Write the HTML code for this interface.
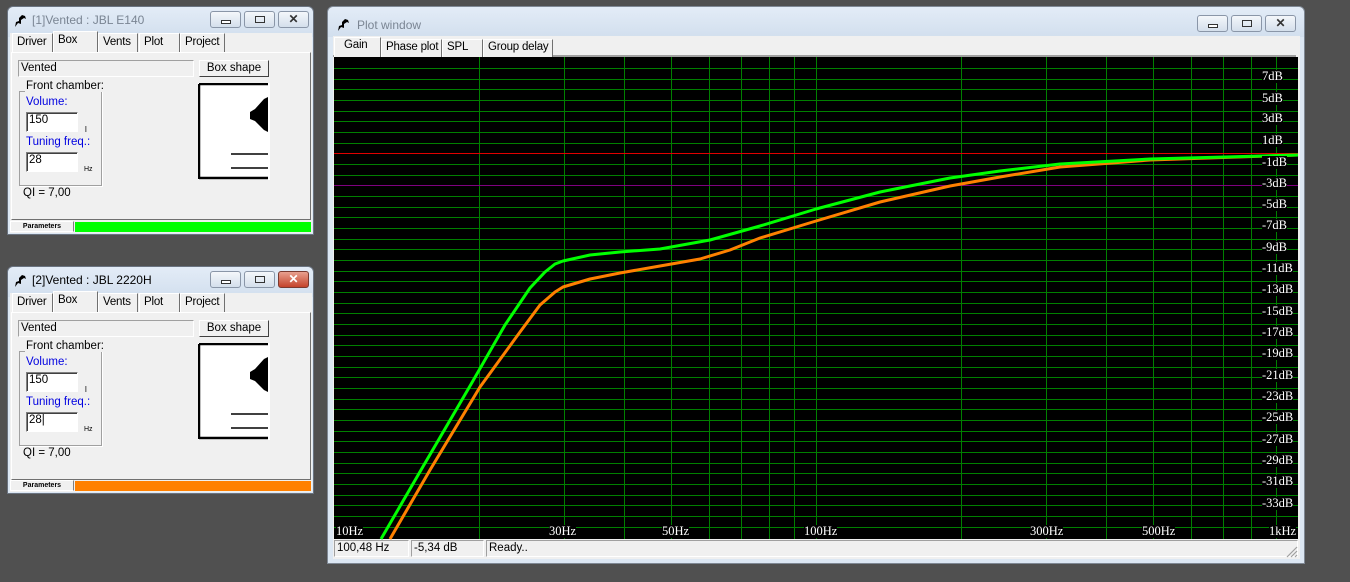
<!DOCTYPE html>
<html><head><meta charset="utf-8"><style>
*{box-sizing:border-box;margin:0;padding:0}
body{width:1350px;height:582px;background:#505050;position:relative;overflow:hidden;font-family:"Liberation Sans",sans-serif;font-size:11.5px;color:#000}
.a{position:absolute;white-space:nowrap}
.win{position:absolute;background:#dce7f3;border:1px solid #6a7380;border-radius:6px 6px 0 0}
.title{position:absolute;left:0;right:0;top:0;height:30px;background:linear-gradient(#e3ecf7,#d2dfee);border-radius:6px 6px 0 0}
.tb{position:absolute;height:17px;width:31px;border:1px solid #8a96a8;border-radius:3px;background:linear-gradient(#f4f7fb,#d4dfec)}
.tb.red{background:linear-gradient(#e8a08f,#c4432b);border-color:#7a3a30}
.client{position:absolute;background:#f0f0f0}
.tab{position:absolute;height:19px;border:1px solid #fff;border-right:1px solid #707070;border-bottom:none;background:#f0f0f0;padding:2px 0 0 4px;font-size:11.5px;white-space:nowrap;overflow:hidden;letter-spacing:-0.2px}
.sunk{position:absolute;border:1px solid;border-color:#a0a0a0 #fff #fff #a0a0a0;background:#f0f0f0;white-space:nowrap}
.inp{position:absolute;background:#fff;border:1px solid;border-color:#808080 #fff #fff #808080;box-shadow:inset 1px 1px 0 #404040;padding:1px 2px;font-size:11.5px}
.btn{position:absolute;border:1px solid;border-color:#fff #404040 #404040 #fff;background:#f0f0f0;text-align:center;font-size:11.5px;padding-top:1px;white-space:nowrap}
.blue{color:#0000e0}
.dl{position:absolute;left:1262px;color:#fff;background:#000;font-family:"Liberation Serif",serif;font-size:12.5px;line-height:13px;white-space:nowrap}
.hl{position:absolute;top:525px;color:#fff;background:#000;font-family:"Liberation Serif",serif;font-size:12.5px;line-height:13px;white-space:nowrap}
</style></head><body>

<!-- Window 1 -->
<div class="win" style="left:7px;top:6px;width:307px;height:229px">
 <div class="title"></div>
 <svg class="a" style="left:5px;top:7px" width="14" height="14"><path d="M2 13 L5 9 L8 10 L8 6 L11 4 L13 5 L12 2 L9 1 L6 4 L6 7 L3 8 Z" fill="#000"/></svg>
 <div class="a" style="left:24px;top:6px;color:#7a8593;font-size:12px">[1]Vented : JBL E140</div>
 <div class="tb" style="left:202px;top:4px"><div class="a" style="left:10px;top:8px;width:10px;height:4px;border:1px solid #333;background:#fff"></div></div>
 <div class="tb" style="left:236px;top:4px"><div class="a" style="left:10px;top:4px;width:10px;height:7px;border:1px solid #333"></div></div>
 <div class="tb" style="left:270px;top:4px;text-align:center;font-weight:bold;color:#333;font-size:12px;line-height:14px">✕</div>
 <div class="client" style="left:2px;top:26px;width:302px;height:200px"></div>
 <div class="tab" style="left:4px;top:26px;width:41px">Driver</div>
 <div class="tab" style="left:45px;top:24px;width:45px;height:22px;padding-top:2px">Box</div>
 <div class="tab" style="left:90px;top:26px;width:40px">Vents</div>
 <div class="tab" style="left:131px;top:26px;width:41px">Plot</div>
 <div class="tab" style="left:172px;top:26px;width:45px">Project</div>
 <div class="a" style="left:3px;top:45px;width:300px;height:168px;border:1px solid;border-color:#fff #707070 #707070 #fff"></div>
 <div class="sunk" style="left:10px;top:53px;width:176px;height:17px;padding:1px 2px">Vented</div>
 <div class="btn" style="left:191px;top:53px;width:70px;height:17px">Box shape</div>
 <div class="a" style="left:11px;top:84px;width:83px;height:95px;border:1px solid #a0a0a0;box-shadow:1px 1px 0 #fff"></div>
 <div class="a" style="left:17px;top:73px;background:#f0f0f0;padding:0 1px">Front chamber:</div>
 <div class="a blue" style="left:18px;top:89px">Volume:</div>
 <div class="inp" style="left:18px;top:105px;width:52px;height:20px">150</div>
 <div class="a" style="left:77px;top:118px;font-size:8px">l</div>
 <div class="a blue" style="left:18px;top:129px">Tuning freq.:</div>
 <div class="inp" style="left:18px;top:145px;width:52px;height:20px">28</div>
 <div class="a" style="left:76px;top:159px;font-size:7px">Hz</div>
 <svg class="a" style="left:190px;top:76px" width="72" height="97"><rect x="0" y="0" width="72" height="97" fill="#fff"/><path d="M1 1 H70 M1 1 V96 M1 95 H70" stroke="#000" stroke-width="2.5" fill="none"/><path d="M33 71 H70 M33 85 H70" stroke="#000" stroke-width="1.5"/><path d="M52 29 L57 26 L66 16 L70 14 L70 49 L66 47 L57 38 L52 36 Z" fill="#000"/></svg>
 <div class="a" style="left:15px;top:180px">QI = 7,00</div>
 <div class="a" style="left:2px;top:214px;width:64px;height:11px;border:1px solid #fff;border-right-color:#808080;font-size:7px;font-weight:bold;text-align:center;line-height:10px;background:#f0f0f0">Parameters</div>
 <div class="a" style="left:67px;top:215px;width:236px;height:10px;background:#00ff00"></div>
</div>

<!-- Window 2 -->
<div class="win" style="left:7px;top:266px;width:307px;height:228px">
 <div class="title"></div>
 <svg class="a" style="left:5px;top:7px" width="14" height="14"><path d="M2 13 L5 9 L8 10 L8 6 L11 4 L13 5 L12 2 L9 1 L6 4 L6 7 L3 8 Z" fill="#000"/></svg>
 <div class="a" style="left:24px;top:6px;color:#000;font-size:12px">[2]Vented : JBL 2220H</div>
 <div class="tb" style="left:202px;top:4px"><div class="a" style="left:10px;top:8px;width:10px;height:4px;border:1px solid #333;background:#fff"></div></div>
 <div class="tb" style="left:236px;top:4px"><div class="a" style="left:10px;top:4px;width:10px;height:7px;border:1px solid #333"></div></div>
 <div class="tb red" style="left:270px;top:4px;text-align:center;font-weight:bold;color:#fff;font-size:12px;line-height:14px">✕</div>
 <div class="client" style="left:2px;top:26px;width:302px;height:199px"></div>
 <div class="tab" style="left:4px;top:26px;width:41px">Driver</div>
 <div class="tab" style="left:45px;top:24px;width:45px;height:22px;padding-top:2px">Box</div>
 <div class="tab" style="left:90px;top:26px;width:40px">Vents</div>
 <div class="tab" style="left:131px;top:26px;width:41px">Plot</div>
 <div class="tab" style="left:172px;top:26px;width:45px">Project</div>
 <div class="a" style="left:3px;top:45px;width:300px;height:168px;border:1px solid;border-color:#fff #707070 #707070 #fff"></div>
 <div class="sunk" style="left:10px;top:53px;width:176px;height:17px;padding:1px 2px">Vented</div>
 <div class="btn" style="left:191px;top:53px;width:70px;height:17px">Box shape</div>
 <div class="a" style="left:11px;top:84px;width:83px;height:95px;border:1px solid #a0a0a0;box-shadow:1px 1px 0 #fff"></div>
 <div class="a" style="left:17px;top:73px;background:#f0f0f0;padding:0 1px">Front chamber:</div>
 <div class="a blue" style="left:18px;top:89px">Volume:</div>
 <div class="inp" style="left:18px;top:105px;width:52px;height:20px">150</div>
 <div class="a" style="left:77px;top:118px;font-size:8px">l</div>
 <div class="a blue" style="left:18px;top:129px">Tuning freq.:</div>
 <div class="inp" style="left:18px;top:145px;width:52px;height:20px">28|</div>
 <div class="a" style="left:76px;top:159px;font-size:7px">Hz</div>
 <svg class="a" style="left:190px;top:76px" width="72" height="97"><rect x="0" y="0" width="72" height="97" fill="#fff"/><path d="M1 1 H70 M1 1 V96 M1 95 H70" stroke="#000" stroke-width="2.5" fill="none"/><path d="M33 71 H70 M33 85 H70" stroke="#000" stroke-width="1.5"/><path d="M52 29 L57 26 L66 16 L70 14 L70 49 L66 47 L57 38 L52 36 Z" fill="#000"/></svg>
 <div class="a" style="left:15px;top:180px">QI = 7,00</div>
 <div class="a" style="left:2px;top:213px;width:64px;height:11px;border:1px solid #fff;border-right-color:#808080;font-size:7px;font-weight:bold;text-align:center;line-height:10px;background:#f0f0f0">Parameters</div>
 <div class="a" style="left:67px;top:214px;width:236px;height:10px;background:#ff8000"></div>
</div>

<!-- Plot window -->
<div class="win" style="left:327px;top:6px;width:978px;height:558px;border-color:#7f8894">
 <div class="title"></div>
 <svg class="a" style="left:8px;top:11px" width="14" height="14"><path d="M2 13 L5 9 L8 10 L8 6 L11 4 L13 5 L12 2 L9 1 L6 4 L6 7 L3 8 Z" fill="#000"/></svg>
 <div class="a" style="left:29px;top:11px;color:#7a8593;font-size:12px">Plot window</div>
 <div class="tb" style="left:869px;top:8px"><div class="a" style="left:10px;top:8px;width:10px;height:4px;border:1px solid #333;background:#fff"></div></div>
 <div class="tb" style="left:903px;top:8px"><div class="a" style="left:10px;top:4px;width:10px;height:7px;border:1px solid #333"></div></div>
 <div class="tb" style="left:937px;top:8px;text-align:center;font-weight:bold;color:#333;font-size:12px;line-height:14px">✕</div>
 <div class="client" style="left:5px;top:29px;width:967px;height:523px"></div>
 <div class="a" style="left:5px;top:48px;width:963px;height:2px;background:#a0a0a0"></div>
 <div class="tab" style="left:6px;top:30px;width:47px;height:20px;padding:1px 0 0 9px">Gain</div>
 <div class="tab" style="left:53px;top:32px;width:61px;height:18px;padding-top:1px">Phase plot</div>
 <div class="tab" style="left:114px;top:32px;width:41px;height:18px;padding-top:1px">SPL</div>
 <div class="tab" style="left:155px;top:32px;width:70px;height:18px;padding-top:1px">Group delay</div>
</div>

<svg class="a" style="left:0;top:0" width="1350" height="582">
 <rect x="334" y="57" width="964" height="482" fill="#000"/>
 <path stroke="#008000" stroke-width="1" shape-rendering="crispEdges" fill="none" d="M334 68.5H1298M334 79.5H1298M334 89.5H1298M334 100.5H1298M334 111.5H1298M334 121.5H1298M334 132.5H1298M334 143.5H1298M334 164.5H1298M334 175.5H1298M334 196.5H1298M334 207.5H1298M334 217.5H1298M334 228.5H1298M334 239.5H1298M334 249.5H1298M334 260.5H1298M334 271.5H1298M334 281.5H1298M334 292.5H1298M334 303.5H1298M334 313.5H1298M334 324.5H1298M334 335.5H1298M334 345.5H1298M334 356.5H1298M334 367.5H1298M334 377.5H1298M334 388.5H1298M334 399.5H1298M334 409.5H1298M334 420.5H1298M334 431.5H1298M334 441.5H1298M334 452.5H1298M334 463.5H1298M334 473.5H1298M334 484.5H1298M334 495.5H1298M334 505.5H1298M334 516.5H1298M334 527.5H1298
 M479.5 57V539M564.5 57V539M624.5 57V539M671.5 57V539M709.5 57V539M741.5 57V539M769.5 57V539M794.5 57V539M816.5 57V539M961.5 57V539M1046.5 57V539M1106.5 57V539M1153.5 57V539M1191.5 57V539M1223.5 57V539M1251.5 57V539M1276.5 57V539"/>
 <path d="M334 153.5H1298" stroke="#e00000" stroke-width="1" shape-rendering="crispEdges"/>
 <path d="M334 185.5H1298" stroke="#800080" stroke-width="1" shape-rendering="crispEdges"/>
 <polyline fill="none" stroke="#ff8000" stroke-width="3" stroke-linejoin="round" points="390,539 430,470 480,387 520,332 540,305 555,292 563,287 590,279 620,273 660,266 700,259 730,250 760,238 816,221 880,202 950,186 1000,177 1060,167 1150,160 1298,155"/>
 <polyline fill="none" stroke="#00ff00" stroke-width="3" stroke-linejoin="round" points="381,539 421,470 470,386 505,325 530,288 545,272 555,264 563,261 590,255 620,252 660,249 710,240 760,226 816,209 880,192 950,178 1000,171 1060,164 1150,159 1298,155"/>
</svg>
<div class="dl" style="top:70px">7dB</div>
<div class="dl" style="top:92px">5dB</div>
<div class="dl" style="top:112px">3dB</div>
<div class="dl" style="top:134px">1dB</div>
<div class="dl" style="top:156px">-1dB</div>
<div class="dl" style="top:177px">-3dB</div>
<div class="dl" style="top:198px">-5dB</div>
<div class="dl" style="top:219px">-7dB</div>
<div class="dl" style="top:241px">-9dB</div>
<div class="dl" style="top:262px">-11dB</div>
<div class="dl" style="top:283px">-13dB</div>
<div class="dl" style="top:305px">-15dB</div>
<div class="dl" style="top:326px">-17dB</div>
<div class="dl" style="top:347px">-19dB</div>
<div class="dl" style="top:369px">-21dB</div>
<div class="dl" style="top:390px">-23dB</div>
<div class="dl" style="top:411px">-25dB</div>
<div class="dl" style="top:433px">-27dB</div>
<div class="dl" style="top:454px">-29dB</div>
<div class="dl" style="top:475px">-31dB</div>
<div class="dl" style="top:497px">-33dB</div>
<div class="hl" style="left:336px">10Hz</div>
<div class="hl" style="left:549px">30Hz</div>
<div class="hl" style="left:662px">50Hz</div>
<div class="hl" style="left:804px">100Hz</div>
<div class="hl" style="left:1030px">300Hz</div>
<div class="hl" style="left:1142px">500Hz</div>
<div class="hl" style="left:1269px">1kHz</div>

<div class="sunk" style="left:334px;top:540px;width:75px;height:17px;padding:1px 2px">100,48 Hz</div>
<div class="sunk" style="left:411px;top:540px;width:73px;height:17px;padding:1px 2px">-5,34 dB</div>
<div class="sunk" style="left:486px;top:540px;width:812px;height:17px;padding:1px 2px">Ready..</div>
<svg class="a" style="left:1286px;top:546px" width="12" height="12"><path d="M11 1L1 11M11 5L5 11M11 9L9 11" stroke="#a0a0a0" stroke-width="1.2"/></svg>
</body></html>
